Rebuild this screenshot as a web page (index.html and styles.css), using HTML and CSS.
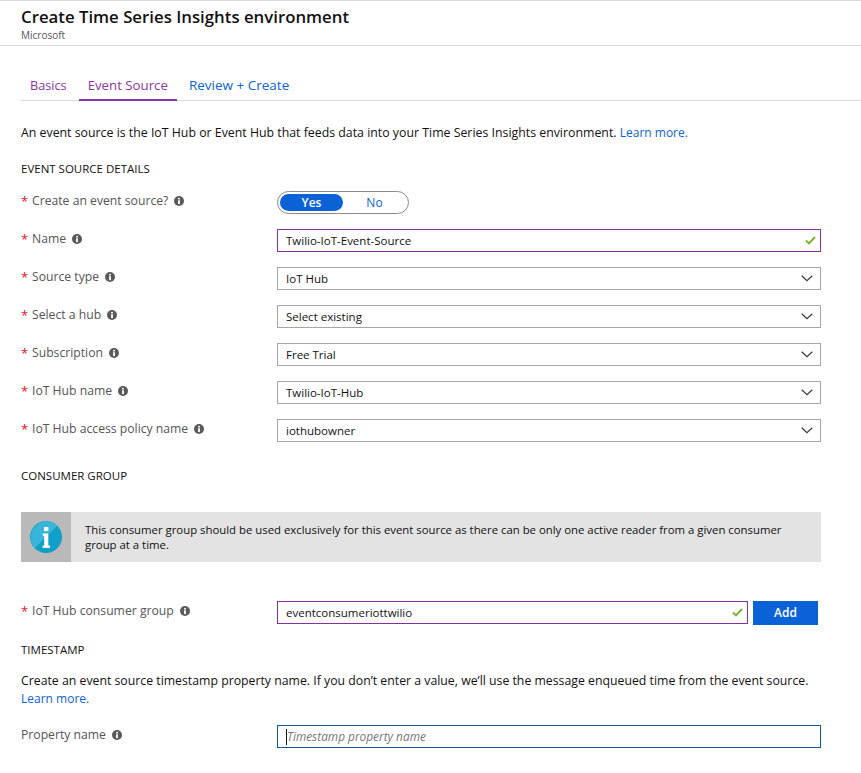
FILE: index.html
```html
<!DOCTYPE html>
<html lang="en">
<head>
<meta charset="utf-8">
<title>Create Time Series Insights environment</title>
<link rel="stylesheet" href="styles.css">
</head>
<body>
<svg class="defs" width="0" height="0" aria-hidden="true">
  <symbol id="i" viewBox="0 0 10 10">
    <circle cx="5" cy="5" r="5" fill="#5a5a5a"/>
    <rect x="4.1" y="4.2" width="1.8" height="3.9" fill="#fff"/>
    <rect x="4.1" y="1.9" width="1.8" height="1.6" fill="#fff"/>
  </symbol>
  <symbol id="chev" viewBox="0 0 12 7">
    <path d="M.7.8 6 5.8 11.3.8" fill="none" stroke="#3a3a3a" stroke-width="1.2"/>
  </symbol>
  <symbol id="check" viewBox="0 0 11 9">
    <path d="M1 4.6 4 7.4 10 1" fill="none" stroke="#7ab32e" stroke-width="2"/>
  </symbol>
</svg>
<header class="header">
  <h1 class="title">Create Time Series Insights environment</h1>
  <div class="publisher">Microsoft</div>
</header>
<nav class="tabs">
  <a class="tab visited basics">Basics</a>
  <a class="tab visited active">Event Source</a>
  <a class="tab link review">Review + Create</a>
</nav>
<main class="content">
  <p class="intro">An event source is the IoT Hub or Event Hub that feeds data into your Time Series Insights environment. <a class="link more">Learn more.</a></p>
  <h2 class="section first">EVENT SOURCE DETAILS</h2>

  <div class="row toggle-row">
    <div class="label"><span class="req">*</span>Create an event source?<svg class="info"><use href="#i"/></svg></div>
    <div class="toggle"><span class="opt on">Yes</span><span class="opt">No</span></div>
  </div>
  <div class="row">
    <div class="label"><span class="req">*</span>Name<svg class="info"><use href="#i"/></svg></div>
    <div class="field valid"><span>Twilio-IoT-Event-Source</span><svg class="check"><use href="#check"/></svg></div>
  </div>
  <div class="row">
    <div class="label"><span class="req">*</span>Source type<svg class="info"><use href="#i"/></svg></div>
    <div class="field"><span>IoT Hub</span><svg class="chev"><use href="#chev"/></svg></div>
  </div>
  <div class="row">
    <div class="label"><span class="req">*</span>Select a hub<svg class="info"><use href="#i"/></svg></div>
    <div class="field"><span>Select existing</span><svg class="chev"><use href="#chev"/></svg></div>
  </div>
  <div class="row">
    <div class="label"><span class="req">*</span>Subscription<svg class="info"><use href="#i"/></svg></div>
    <div class="field"><span>Free Trial</span><svg class="chev"><use href="#chev"/></svg></div>
  </div>
  <div class="row">
    <div class="label"><span class="req">*</span>IoT Hub name<svg class="info"><use href="#i"/></svg></div>
    <div class="field"><span>Twilio-IoT-Hub</span><svg class="chev"><use href="#chev"/></svg></div>
  </div>
  <div class="row">
    <div class="label"><span class="req">*</span>IoT Hub access policy name<svg class="info"><use href="#i"/></svg></div>
    <div class="field"><span>iothubowner</span><svg class="chev"><use href="#chev"/></svg></div>
  </div>

  <h2 class="section consumer">CONSUMER GROUP</h2>
  <div class="notice">
    <div class="notice-icon">
      <svg width="32" height="32" viewBox="0 0 32 32">
        <circle cx="16" cy="16" r="16" fill="#0f9fc8"/>
        <path d="M4.7 27.3A16 16 0 0 1 27.3 4.7Z" fill="#38b5d8"/>
        <rect x="14" y="6" width="4.4" height="4" fill="#fff"/>
        <path d="M12.8 12.6h5.5v12h1.6V27h-7.3v-2.4h1.6v-9.6h-1.4z" fill="#fff"/>
      </svg>
    </div>
    <div class="notice-text">This consumer group should be used exclusively for this event source as there can be only one active reader from a given consumer group at a time.</div>
  </div>
  <div class="row group-row">
    <div class="label"><span class="req">*</span>IoT Hub consumer group<svg class="info"><use href="#i"/></svg></div>
    <div class="field valid short"><span>eventconsumeriottwilio</span><svg class="check"><use href="#check"/></svg></div>
    <button class="add">Add</button>
  </div>
  <h2 class="section timestamp">TIMESTAMP</h2>
  <p class="ts-text">Create an event source timestamp property name. If you don’t enter a value, we’ll use the message enqueued time from the event source. <a class="link more">Learn more.</a></p>
  <div class="row prop-row">
    <div class="label">Property name<svg class="info"><use href="#i"/></svg></div>
    <div class="field focus"><span class="caret"></span><span class="placeholder">Timestamp property name</span></div>
  </div>
</main>
</body>
</html>
```
FILE: styles.css
```css
* { box-sizing: border-box; }
html, body { margin: 0; padding: 0; }
body {
  width: 861px;
  height: 773px;
  overflow: hidden;
  background: #fff;
  color: #000;
  font-family: "Open Sans", "Noto Sans", "Liberation Sans", sans-serif;
  font-size: 12px;
  border-top: 1px solid #d9d9d9;
}
.defs { position: absolute; }
.header {
  height: 45px;
  padding: 6px 21px 0;
  border-bottom: 1px solid #d9d9d9;
}
.title { margin: 0; font-size: 16.8px; line-height: 20px; font-weight: 600; color: #111; }
.publisher { font-size: 10px; line-height: 14px; margin-top: 1px; color: #555; }
.tabs {
  display: flex;
  margin: 29px 0 0 21px;
  height: 26px;
  border-bottom: 1px solid #d9d9d9;
}
.tab { font-size: 13.25px; line-height: 21px; height: 26px; padding: 0 9px; margin-right: 3px; }
.tab.basics { font-size: 12.7px; }
.tab.review { font-size: 13.5px; }
.tab.visited { color: #8c35a0; }
.tab.active { border-bottom: 2px solid #8c35a0; }
.link { color: #0b62d6; }
.more { font-size: 12px; }
.content { padding: 0 21px; width: 842px; }
.intro { margin: 23px 0 0; line-height: 18px; font-size: 12.33px; color: #111; }
.section { margin: 0; font-size: 11.5px; font-weight: 400; line-height: 16px; color: #111; }
.section.first { margin-top: 19px; }
.row { display: flex; align-items: center; height: 23px; margin-top: 15px; }
.toggle-row { margin-top: 14px; }
.label { width: 256px; flex: none; display: flex; align-items: center; color: #555; font-size: 12.2px; height: 20px; margin-top: -4px; }
.req { color: #e81123; width: 11px; flex: none; font-size: 13px; }
.info { width: 10px; height: 10px; margin-left: 6px; flex: none; }
.toggle {
  width: 132px; height: 23px; border: 1px solid #8a8a8a; border-radius: 12px;
  display: flex; padding: 2px; background: #fff;
}
.opt { flex: 1; text-align: center; color: #0b62d6; line-height: 17px; font-size: 12px; border-radius: 9px; }
.opt.on { background: #0b62d6; color: #fff; font-weight: 600; }
.field {
  width: 544px; height: 23px; border: 1px solid #a6a6a6; padding: 0 8px;
  display: flex; align-items: center; justify-content: space-between; font-size: 11.5px; color: #111;
}
.field.valid { border-color: #83329b; }
.field.short { width: 471px; }
.field.focus { border-color: #15589e; justify-content: flex-start; }
.chev { width: 12px; height: 7px; margin-right: -1px; }
.check { width: 11px; height: 9px; margin-right: -4px; }
.caret { width: 1px; height: 16px; background: #111; flex: none; }
.placeholder { font-style: italic; color: #777; font-size: 11.85px; line-height: 14px; margin-top: -1px; }
.section.consumer { margin-top: 26px; }
.notice { display: flex; height: 50px; margin-top: 28px; background: #e3e3e3; }
.notice-icon { width: 50px; flex: none; background: #b9b9b9; display: flex; align-items: center; justify-content: center; }
.notice-text { padding: 10px 14px 0; font-size: 11.36px; line-height: 15px; color: #111; }
.group-row { margin-top: 39px; }
.add { width: 65px; height: 24px; margin-left: 5px; border: 0; background: #0b62d6; color: #fff; font: 600 12px "Open Sans", sans-serif; }
.section.timestamp { margin-top: 18px; }
.ts-text { margin: 14px 0 0; font-size: 12.29px; line-height: 18px; color: #111; }
.prop-row { margin-top: 17px; }
```
